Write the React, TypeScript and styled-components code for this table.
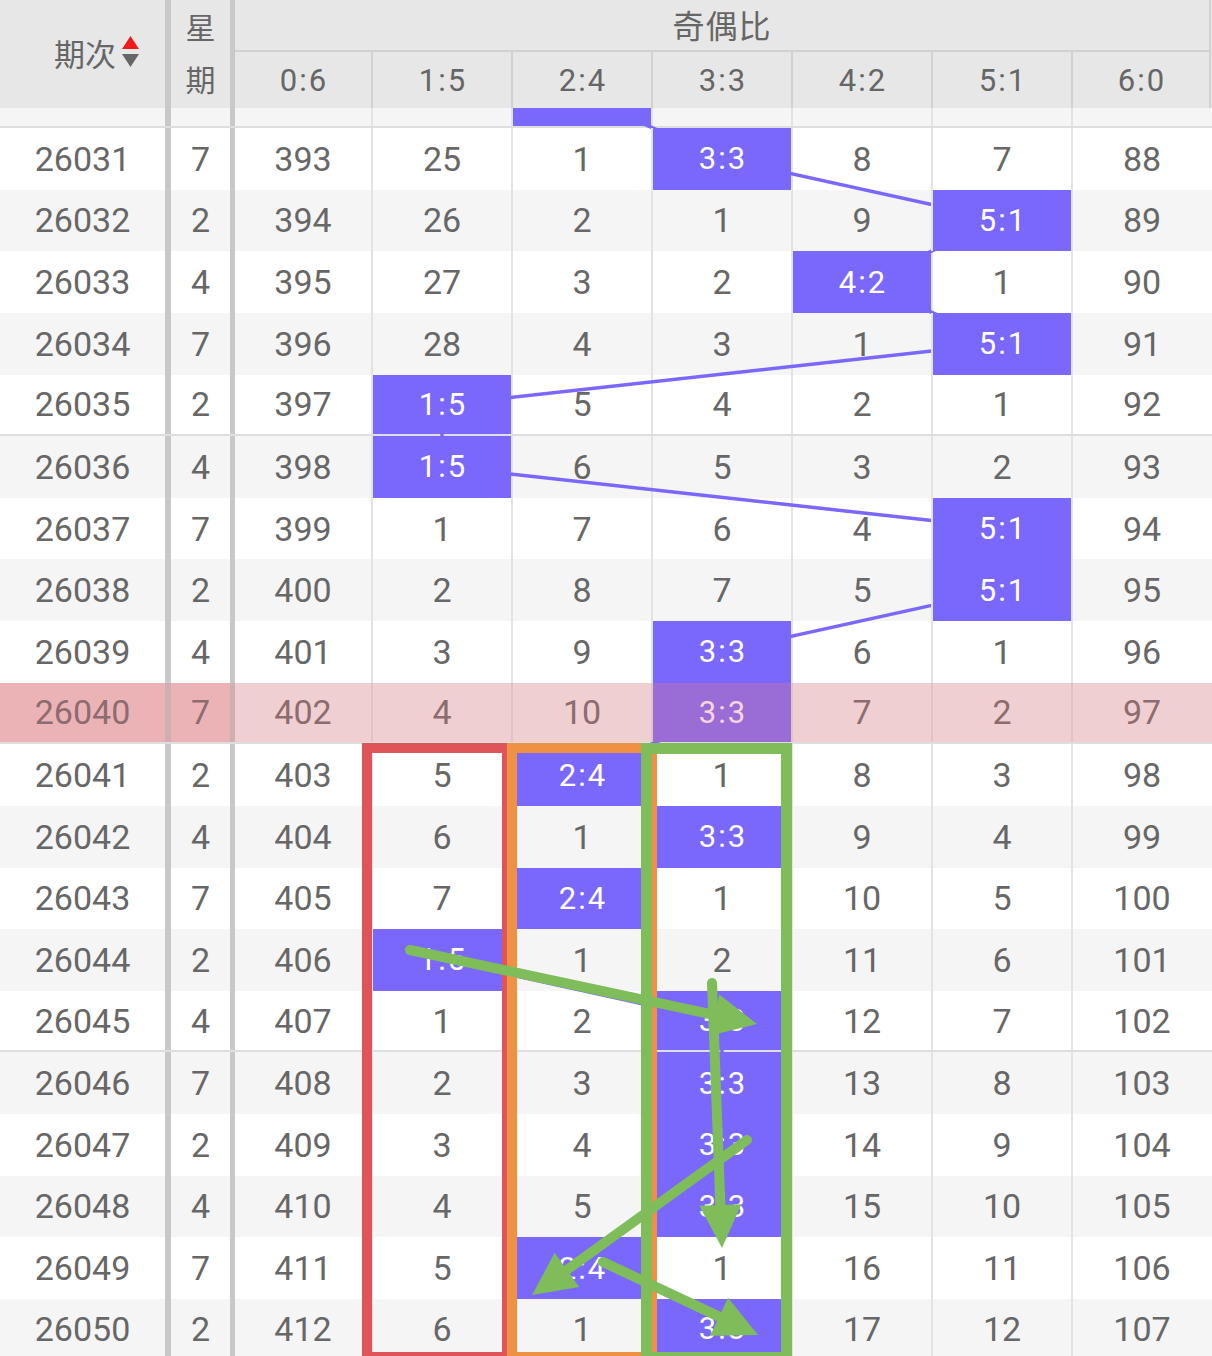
import React from 'react';
import styled, { createGlobalStyle, css } from 'styled-components';

const ROW_H = 61.63;
const HEADER_H = 108;
const SCROLL_OFFSET = 41.63;
const COLS = '165px 6px 59px 5px 136px repeat(6, 140px)';
const RATIOS = ['0:6', '1:5', '2:4', '3:3', '4:2', '5:1', '6:0'];
const COL_X = [303, 442, 582, 722, 862, 1002, 1142];
const PURPLE = '#7968fb';

type RowData = [number, number, (number | null)[]];

const DATA: RowData[] = [
  [26030, 4, [392, 24, null, 7, 7, 6, 87]],
  [26031, 7, [393, 25, 1, null, 8, 7, 88]],
  [26032, 2, [394, 26, 2, 1, 9, null, 89]],
  [26033, 4, [395, 27, 3, 2, null, 1, 90]],
  [26034, 7, [396, 28, 4, 3, 1, null, 91]],
  [26035, 2, [397, null, 5, 4, 2, 1, 92]],
  [26036, 4, [398, null, 6, 5, 3, 2, 93]],
  [26037, 7, [399, 1, 7, 6, 4, null, 94]],
  [26038, 2, [400, 2, 8, 7, 5, null, 95]],
  [26039, 4, [401, 3, 9, null, 6, 1, 96]],
  [26040, 7, [402, 4, 10, null, 7, 2, 97]],
  [26041, 2, [403, 5, null, 1, 8, 3, 98]],
  [26042, 4, [404, 6, 1, null, 9, 4, 99]],
  [26043, 7, [405, 7, null, 1, 10, 5, 100]],
  [26044, 2, [406, null, 1, 2, 11, 6, 101]],
  [26045, 4, [407, 1, 2, null, 12, 7, 102]],
  [26046, 7, [408, 2, 3, null, 13, 8, 103]],
  [26047, 2, [409, 3, 4, null, 14, 9, 104]],
  [26048, 4, [410, 4, 5, null, 15, 10, 105]],
  [26049, 7, [411, 5, null, 1, 16, 11, 106]],
  [26050, 2, [412, 6, 1, null, 17, 12, 107]],
];

const HIGHLIGHT = 26040;

const GlobalStyle = createGlobalStyle`
  html, body { margin: 0; padding: 0; background: #fff; }
  body { font-family: Roboto, "Noto Sans CJK SC", sans-serif; }
`;

const Page = styled.div`
  position: relative;
  width: 1212px;
  height: 1356px;
  overflow: hidden;
  background: #fff;
  color: #676767;
  font-family: Roboto, "Noto Sans CJK SC", sans-serif;
`;

const Header = styled.div`
  display: grid;
  grid-template-columns: ${COLS};
  grid-template-rows: 52px 56px;
  height: ${HEADER_H}px;
  background: #e7e7e7;
  color: #666;
`;

const IssueHead = styled.div`
  grid-row: 1 / 3;
  grid-column: 1;
  display: flex;
  align-items: center;
  justify-content: center;
  gap: 6px;
  padding: 0 0 4px 28px;
  font-family: "Noto Sans CJK SC", sans-serif;
  font-size: 31px;
`;

const HeadSep = styled.div<{ $col: number }>`
  grid-row: 1 / 3;
  grid-column: ${(p) => p.$col};
  background: #c9c9c9;
`;

const WeekHead = styled.div`
  grid-row: 1 / 3;
  grid-column: 3;
  display: flex;
  flex-direction: column;
  align-items: center;
  font-family: "Noto Sans CJK SC", sans-serif;
  font-size: 30px;
  line-height: 52px;
`;

const GroupHead = styled.div`
  grid-row: 1;
  grid-column: 5 / 12;
  display: flex;
  align-items: center;
  justify-content: center;
  padding-bottom: 2px;
  border-bottom: 2px solid #d2d2d2;
  border-right: 2px solid #d2d2d2;
  font-family: "Noto Sans CJK SC", sans-serif;
  font-size: 32px;
  letter-spacing: 1px;
`;

const SubHead = styled.div<{ $first: boolean; $last: boolean }>`
  grid-row: 2;
  display: flex;
  align-items: center;
  justify-content: center;
  padding-left: 2px;
  font-size: 31px;
  letter-spacing: 2px;
  border-left: ${(p) => (p.$first ? 'none' : '2px solid #d2d2d2')};
  border-right: ${(p) => (p.$last ? '2px solid #d2d2d2' : 'none')};
`;

const Viewport = styled.div`
  height: ${1356 - HEADER_H}px;
  overflow: hidden;
`;

const Scroller = styled.div`
  position: relative;
  margin-top: -${SCROLL_OFFSET}px;
`;

const Row = styled.div<{ $alt: boolean; $sep: boolean; $hl: boolean }>`
  display: grid;
  grid-template-columns: ${COLS};
  height: ${ROW_H}px;
  box-sizing: border-box;
  background: ${(p) => (p.$alt ? '#f5f5f5' : '#fff')};
  border-bottom: ${(p) => (p.$sep ? '2px solid #dedede' : 'none')};
  ${(p) =>
    p.$hl &&
    css`
      position: relative;
      &::after {
        content: '';
        position: absolute;
        inset: 0;
        background: rgba(230, 120, 130, 0.3);
        z-index: 3;
        pointer-events: none;
      }
    `}
`;

const PlainCell = styled.div<{ $hl?: boolean }>`
  display: flex;
  align-items: center;
  justify-content: center;
  font-size: 34px;
  background: ${(p) => (p.$hl ? '#efcdcf' : 'transparent')};
`;

const BodySep = styled.div`
  background: #c8c8c8;
`;

const DataCell = styled.div<{ $first: boolean; $hit: boolean }>`
  display: flex;
  align-items: center;
  justify-content: center;
  font-size: 34px;
  border-left: ${(p) => (p.$first ? 'none' : '2px solid #e3e3e3')};
  ${(p) =>
    p.$hit &&
    css`
      position: relative;
      z-index: 2;
      background: ${PURPLE};
      color: #fff;
      font-size: 31px;
      letter-spacing: 2px;
      padding-left: 2px;
    `}
`;

const TrendLayer = styled.svg`
  position: absolute;
  top: 0;
  left: 0;
  z-index: 1;
  pointer-events: none;
`;

const Annotations = styled.svg`
  position: absolute;
  top: 0;
  left: 0;
  z-index: 10;
  pointer-events: none;
`;

const SortIcon = () => (
  <svg width="17" height="32" viewBox="0 0 17 32">
    <polygon points="8.5,0 17,13 0,13" fill="#ee1b1b" />
    <polygon points="0,18 17,18 8.5,31" fill="#666" />
  </svg>
);

type Pt = [number, number];

const Arrow = ({ from, to, color }: { from: Pt; to: Pt; color: string }) => {
  const dx = to[0] - from[0];
  const dy = to[1] - from[1];
  const len = Math.hypot(dx, dy);
  const ux = dx / len;
  const uy = dy / len;
  const nx = -uy;
  const ny = ux;
  const headLen = 43;
  const half = 21;
  const bx = to[0] - ux * headLen;
  const by = to[1] - uy * headLen;
  const sx = to[0] - ux * (headLen - 4);
  const sy = to[1] - uy * (headLen - 4);
  const pts = `${to[0]},${to[1]} ${bx + nx * half},${by + ny * half} ${bx - nx * half},${by - ny * half}`;
  return (
    <g>
      <line x1={from[0]} y1={from[1]} x2={sx} y2={sy} stroke={color} strokeWidth={10} strokeLinecap="round" />
      <polygon points={pts} fill={color} />
    </g>
  );
};

export default function App() {
  const hits = DATA.map(([, , vals], i) => {
    const c = vals.findIndex((v) => v === null);
    return [COL_X[c], (i + 0.5) * ROW_H] as Pt;
  });
  const trendPoints = hits.map((p) => p.join(',')).join(' ');
  const green = '#7fbd5a';

  return (
    <Page>
      <GlobalStyle />
      <Header>
        <IssueHead>
          <span>期次</span>
          <SortIcon />
        </IssueHead>
        <HeadSep $col={2} />
        <WeekHead>
          <span>星</span>
          <span>期</span>
        </WeekHead>
        <HeadSep $col={4} />
        <GroupHead>奇偶比</GroupHead>
        {RATIOS.map((r, i) => (
          <SubHead key={r} $first={i === 0} $last={i === RATIOS.length - 1} style={{ gridColumn: i + 5 }}>
            {r}
          </SubHead>
        ))}
      </Header>
      <Viewport>
        <Scroller>
          {DATA.map(([no, wk, vals]) => {
            const hl = no === HIGHLIGHT;
            return (
              <Row key={no} $alt={no % 2 === 0} $sep={no % 5 === 0} $hl={hl}>
                <PlainCell $hl={hl}>{no}</PlainCell>
                <BodySep />
                <PlainCell $hl={hl}>{wk}</PlainCell>
                <BodySep />
                {vals.map((v, i) => (
                  <DataCell key={i} $first={i === 0} $hit={v === null}>
                    {v === null ? RATIOS[i] : v}
                  </DataCell>
                ))}
              </Row>
            );
          })}
          <TrendLayer width={1212} height={DATA.length * ROW_H}>
            <polyline points={trendPoints} fill="none" stroke={PURPLE} strokeWidth={3.5} strokeLinejoin="round" />
          </TrendLayer>
        </Scroller>
      </Viewport>
      <Annotations width={1212} height={1356} viewBox="0 0 1212 1356">
        <rect x={367} y={748} width={140} height={609} fill="none" stroke="#de5459" strokeWidth={10} />
        <rect x={512} y={748} width={140} height={609} fill="none" stroke="#ef9143" strokeWidth={10} />
        <rect x={646.5} y={748.5} width={140} height={609} fill="none" stroke={green} strokeWidth={11} />
        <Arrow from={[410, 950]} to={[757, 1024]} color={green} />
        <Arrow from={[712, 983]} to={[722, 1248]} color={green} />
        <Arrow from={[747, 1140]} to={[532, 1295]} color={green} />
        <Arrow from={[603, 1262]} to={[758, 1335]} color={green} />
      </Annotations>
    </Page>
  );
}
